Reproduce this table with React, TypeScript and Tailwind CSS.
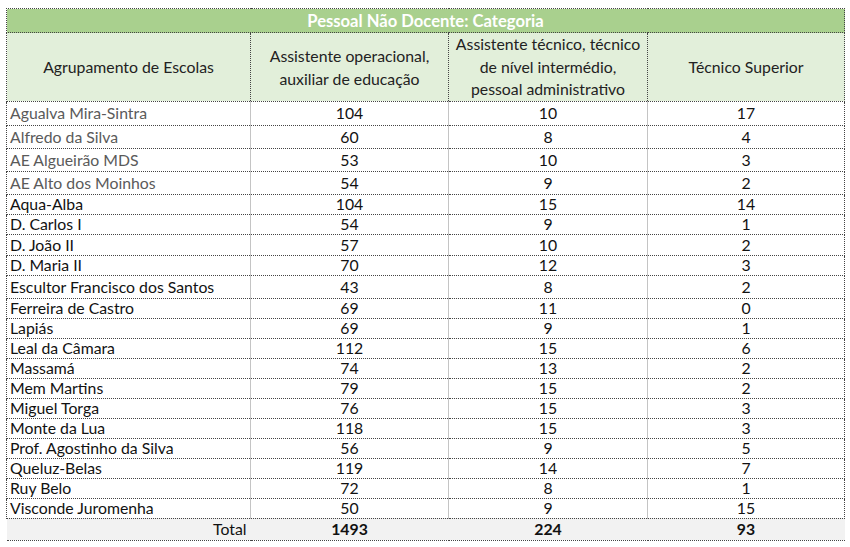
const ROWS: { name: string; a: number; b: number; c: number; h: string; gray?: boolean }[] = [
  { name: 'Agualva Mira-Sintra', a: 104, b: 10, c: 17, h: 'h-[24px]', gray: true },
  { name: 'Alfredo da Silva', a: 60, b: 8, c: 4, h: 'h-[23px]', gray: true },
  { name: 'AE Algueirão MDS', a: 53, b: 10, c: 3, h: 'h-[23px]', gray: true },
  { name: 'AE Alto dos Moinhos', a: 54, b: 9, c: 2, h: 'h-[23px]', gray: true },
  { name: 'Aqua-Alba', a: 104, b: 15, c: 14, h: 'h-[20px]' },
  { name: 'D. Carlos I', a: 54, b: 9, c: 1, h: 'h-[20px]' },
  { name: 'D. João II', a: 57, b: 10, c: 2, h: 'h-[21px]' },
  { name: 'D. Maria II', a: 70, b: 12, c: 3, h: 'h-[20px]' },
  { name: 'Escultor Francisco dos Santos', a: 43, b: 8, c: 2, h: 'h-[23px]' },
  { name: 'Ferreira de Castro', a: 69, b: 11, c: 0, h: 'h-[20px]' },
  { name: 'Lapiás', a: 69, b: 9, c: 1, h: 'h-[20px]' },
  { name: 'Leal da Câmara', a: 112, b: 15, c: 6, h: 'h-[20px]' },
  { name: 'Massamá', a: 74, b: 13, c: 2, h: 'h-[20px]' },
  { name: 'Mem Martins', a: 79, b: 15, c: 2, h: 'h-[20px]' },
  { name: 'Miguel Torga', a: 76, b: 15, c: 3, h: 'h-[20px]' },
  { name: 'Monte da Lua', a: 118, b: 15, c: 3, h: 'h-[20px]' },
  { name: 'Prof. Agostinho da Silva', a: 56, b: 9, c: 5, h: 'h-[20px]' },
  { name: 'Queluz-Belas', a: 119, b: 14, c: 7, h: 'h-[20px]' },
  { name: 'Ruy Belo', a: 72, b: 8, c: 1, h: 'h-[20px]' },
  { name: 'Visconde Juromenha', a: 50, b: 9, c: 15, h: 'h-[20px]' },
];

const dot = 'border-dotted border-[#444]';
// body cells: dotted rows, solid light-grey column rule on the right
const cell = `border-y ${dot} border-r border-r-[#c4c4c4] [border-right-style:solid] p-0 leading-[18px] align-middle`;

export default function App() {
  const total = ROWS.reduce(
    (s, r) => ({ a: s.a + r.a, b: s.b + r.b, c: s.c + r.c }),
    { a: 0, b: 0, c: 0 }
  );

  return (
    <div className="bg-white w-[850px] h-[547px] pt-[8px] pl-[6px] font-['Lato',sans-serif] text-[15.8px] text-[#111]">
      <table className="table-fixed border-collapse w-[838px]">
        <colgroup>
          <col className="w-[244px]" />
          <col className="w-[198px]" />
          <col className="w-[199px]" />
          <col className="w-[197px]" />
        </colgroup>
        <thead>
          <tr className="h-[24px] bg-[#a9d08e]">
            <th
              colSpan={4}
              className={`border ${dot} text-white font-bold text-[16.6px] text-center leading-[18px] p-0`}
            >
              Pessoal Não Docente: Categoria
            </th>
          </tr>
          <tr className="h-[68px] bg-[#e2efda] text-[#222]">
            <th className={`border ${dot} font-normal text-center p-0`}>Agrupamento de Escolas</th>
            <th className={`border ${dot} font-normal text-center leading-[23px] p-0`}>
              Assistente operacional,
              <br />
              auxiliar de educação
            </th>
            <th className={`border ${dot} font-normal text-center leading-[22.5px] p-0`}>
              Assistente técnico, técnico
              <br />
              de nível intermédio,
              <br />
              pessoal administrativo
            </th>
            <th className={`border ${dot} font-normal text-center p-0`}>Técnico Superior</th>
          </tr>
        </thead>
        <tbody>
          {ROWS.map((r) => (
            <tr key={r.name} className={r.h}>
              <td className={`${cell} border-l pl-[3px] ${r.gray ? 'text-[#5a5a5a]' : ''}`}>{r.name}</td>
              <td className={`${cell} text-center`}>{r.a}</td>
              <td className={`${cell} text-center`}>{r.b}</td>
              <td className={`border-y border-r ${dot} text-center p-0 leading-[18px] align-middle`}>{r.c}</td>
            </tr>
          ))}
          <tr className="h-[22px] bg-[#f2f2f2]">
            <td className={`border-b ${dot} text-right pr-[4px] py-0 leading-[18px]`}>Total</td>
            <td className={`border-b ${dot} text-center font-bold p-0 leading-[18px]`}>{total.a}</td>
            <td className={`border-b ${dot} text-center font-bold p-0 leading-[18px]`}>{total.b}</td>
            <td className={`border-b ${dot} text-center font-bold p-0 leading-[18px]`}>{total.c}</td>
          </tr>
        </tbody>
      </table>
    </div>
  );
}
